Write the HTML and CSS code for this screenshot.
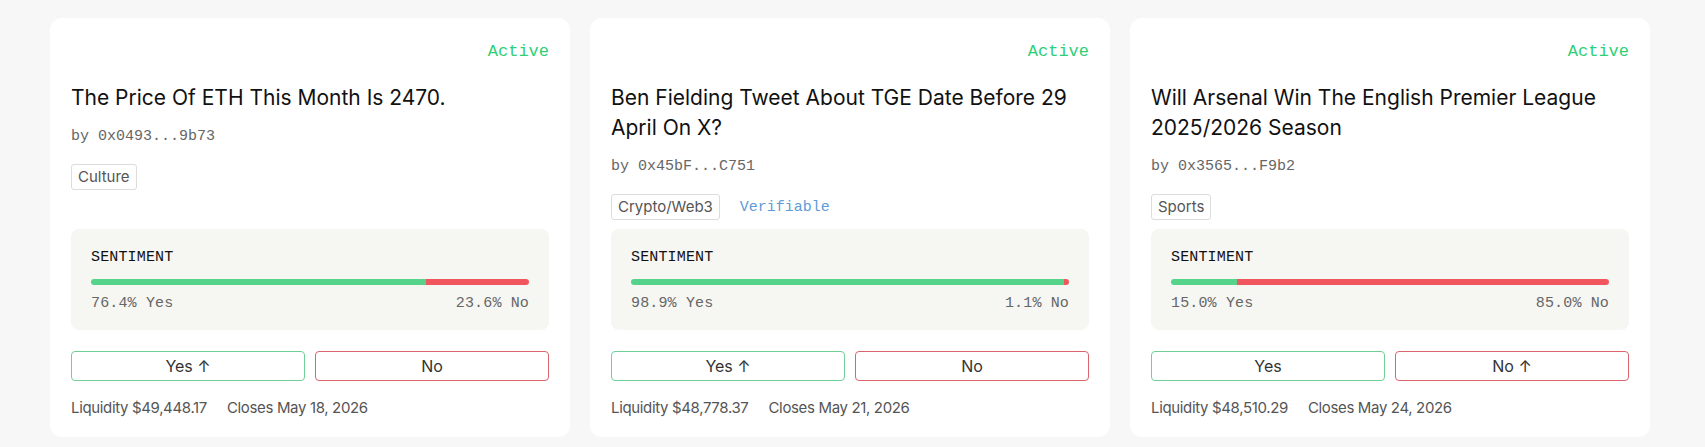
FILE: index.html
```html
<!DOCTYPE html>
<html lang="en">
<head>
    <meta charset="UTF-8">
    <title>Markets</title>
    <link rel="stylesheet" href="styles.css">
</head>
<body>

<main class="market-list">
    <article class="market-card">
        <div class="status">Active</div>
        <h2 class="title">The Price Of ETH This Month Is 2470.</h2>
        <div class="creator">by 0x0493...9b73</div>
        <div class="tags">
            <span class="tag">Culture</span>
        </div>
        <section class="sentiment">
            <div class="sentiment-label">SENTIMENT</div>
            <div class="bar">
                <div class="bar-yes" style="width: 76.4%"></div>
                <div class="bar-no"></div>
            </div>
            <div class="sentiment-values">
                <span>76.4% Yes</span>
                <span>23.6% No</span>
            </div>
        </section>
        <div class="actions">
            <button class="btn btn-yes">Yes ↑</button>
            <button class="btn btn-no">No</button>
        </div>
        <div class="meta">
            <span>Liquidity $49,448.17</span>
            <span>Closes May 18, 2026</span>
        </div>
    </article>

    <article class="market-card">
        <div class="status">Active</div>
        <h2 class="title">Ben Fielding Tweet About TGE Date Before 29 April On X?</h2>
        <div class="creator">by 0x45bF...C751</div>
        <div class="tags">
            <span class="tag">Crypto/Web3</span>
            <span class="verifiable">Verifiable</span>
        </div>
        <section class="sentiment">
            <div class="sentiment-label">SENTIMENT</div>
            <div class="bar">
                <div class="bar-yes" style="width: 98.9%"></div>
                <div class="bar-no"></div>
            </div>
            <div class="sentiment-values">
                <span>98.9% Yes</span>
                <span>1.1% No</span>
            </div>
        </section>
        <div class="actions">
            <button class="btn btn-yes">Yes ↑</button>
            <button class="btn btn-no">No</button>
        </div>
        <div class="meta">
            <span>Liquidity $48,778.37</span>
            <span>Closes May 21, 2026</span>
        </div>
    </article>

    <article class="market-card">
        <div class="status">Active</div>
        <h2 class="title">Will Arsenal Win The English Premier League 2025/2026 Season</h2>
        <div class="creator">by 0x3565...F9b2</div>
        <div class="tags">
            <span class="tag">Sports</span>
        </div>
        <section class="sentiment">
            <div class="sentiment-label">SENTIMENT</div>
            <div class="bar">
                <div class="bar-yes" style="width: 15%"></div>
                <div class="bar-no"></div>
            </div>
            <div class="sentiment-values">
                <span>15.0% Yes</span>
                <span>85.0% No</span>
            </div>
        </section>
        <div class="actions">
            <button class="btn btn-yes">Yes</button>
            <button class="btn btn-no">No ↑</button>
        </div>
        <div class="meta">
            <span>Liquidity $48,510.29</span>
            <span>Closes May 24, 2026</span>
        </div>
    </article>
</main>

</body>
</html>
```

FILE: styles.css
```css
body {
    margin: 0;
    background: #f7f7f7;
    font-family: Inter, "Noto Sans", sans-serif;
    color: #111;
}

.market-list {
    display: grid;
    grid-template-columns: repeat(3, 520px);
    gap: 20px;
    padding: 18px 50px;
}

.market-card {
    display: flex;
    flex-direction: column;
    background: #fff;
    border-radius: 12px;
    padding: 22px 21px 19px;
}

.status {
    text-align: right;
    font-family: "Liberation Mono", monospace;
    font-size: 17px;
    line-height: 24px;
    color: #2fcf78;
}

.title {
    margin: 19px 0 0;
    font-size: 21px;
    line-height: 30px;
    font-weight: 400;
    color: #111;
}

.creator {
    margin-top: 13px;
    font-family: "Liberation Mono", monospace;
    font-size: 15px;
    line-height: 22px;
    color: #666;
}

.tags {
    display: flex;
    align-items: center;
    gap: 20px;
    margin: 16px 0 9px;
}

.tag {
    font-size: 15px;
    line-height: 20px;
    padding: 2px 6px;
    border: 1px solid #dcdcdc;
    border-radius: 3px;
    color: #555;
}

.verifiable {
    font-family: "Liberation Mono", monospace;
    font-size: 15px;
    color: #5f9bd6;
}

.sentiment {
    margin-top: auto;
    background: #f6f6f2;
    border-radius: 8px;
    padding: 20px 20px 18px;
    font-family: "Liberation Mono", monospace;
    font-size: 15px;
    line-height: 17px;
}

.sentiment-label {
    color: #111;
    letter-spacing: 0.15px;
}

.bar {
    display: flex;
    height: 6px;
    margin-top: 13px;
    border-radius: 3px;
    overflow: hidden;
}

.bar-yes {
    background: #55d38a;
}

.bar-no {
    flex: 1;
    background: #f1565f;
}

.sentiment-values {
    display: flex;
    justify-content: space-between;
    margin-top: 10px;
    color: #666;
    letter-spacing: 0.15px;
}

.actions {
    display: grid;
    grid-template-columns: 1fr 1fr;
    gap: 10px;
    margin-top: 21px;
}

.btn {
    height: 30px;
    background: #fff;
    border: 1px solid;
    border-radius: 4px;
    font-family: Inter, "Noto Sans", sans-serif;
    font-size: 16px;
    color: #333;
}

.btn-yes {
    border-color: #6fcf97;
}

.btn-no {
    border-color: #d9646c;
}

.meta {
    display: flex;
    gap: 20px;
    margin-top: 17px;
    font-size: 15px;
    line-height: 20px;
    letter-spacing: -0.35px;
    color: #555;
}
```
